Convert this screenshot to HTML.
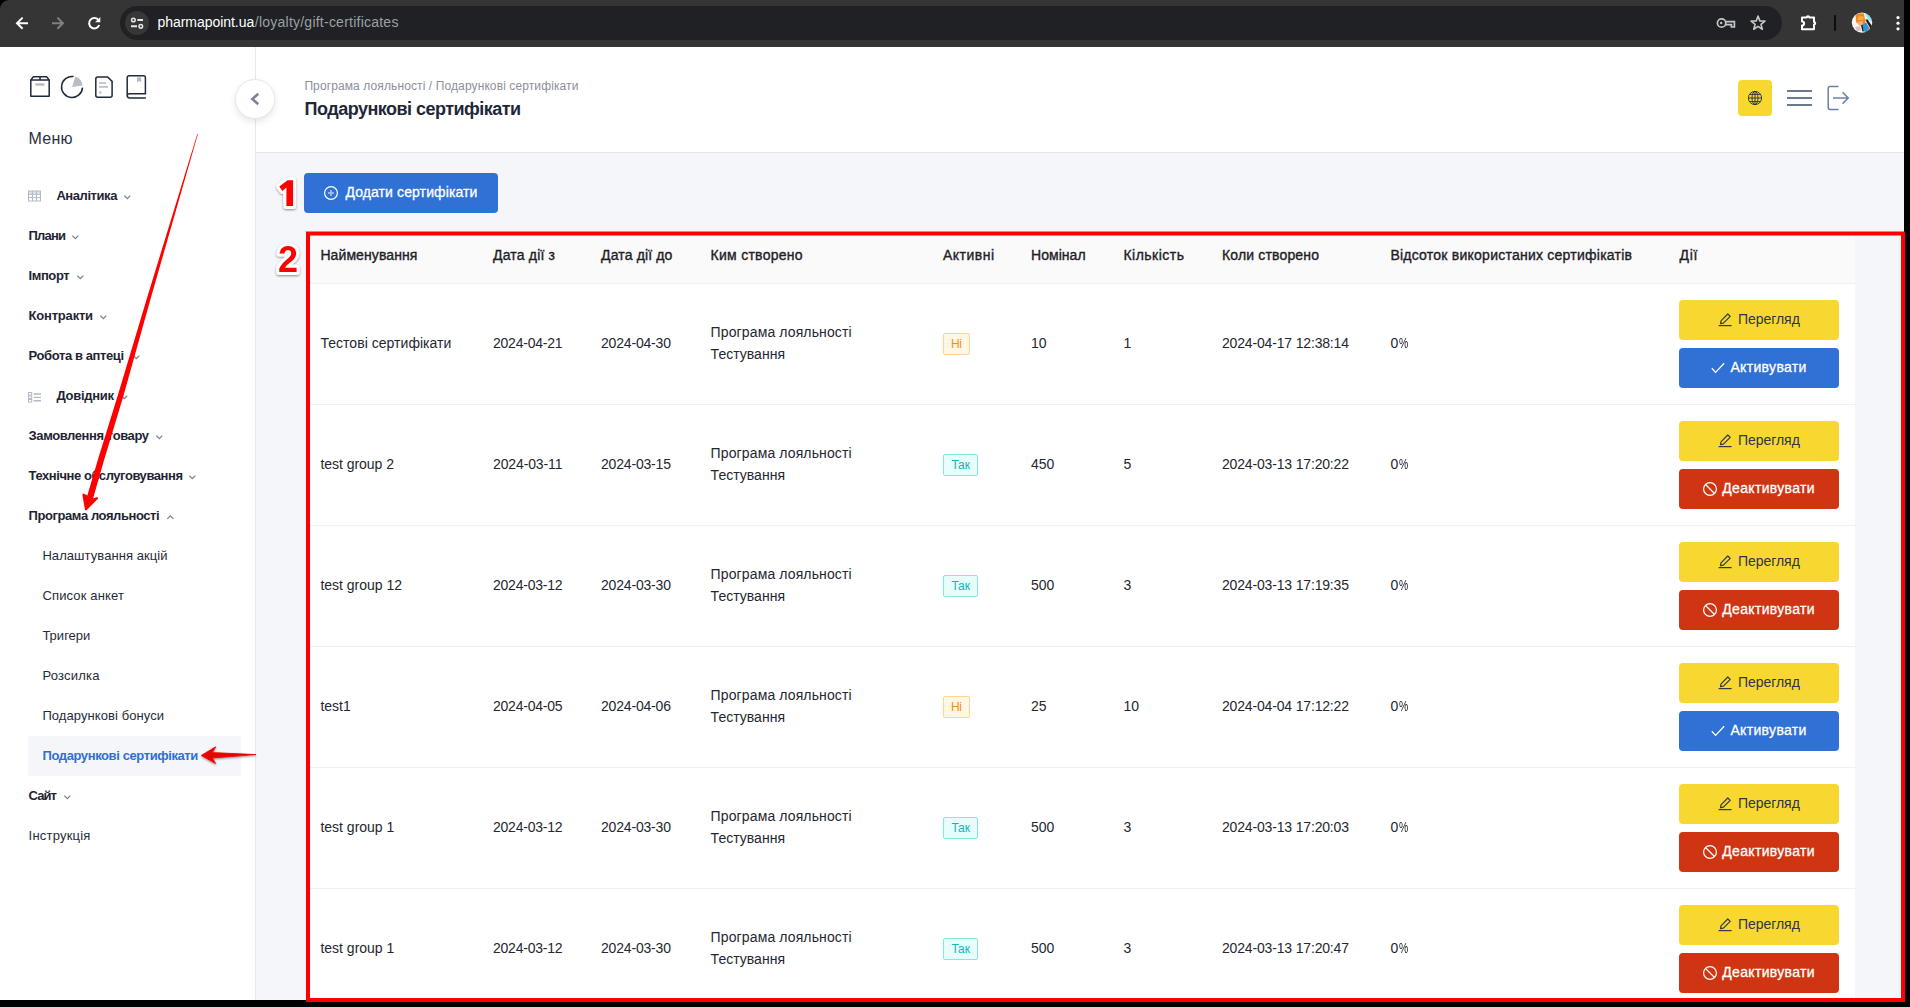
<!DOCTYPE html>
<html lang="uk"><head><meta charset="utf-8"><title>Подарункові сертифікати</title>
<style>
html,body{margin:0;padding:0}
body{width:1910px;height:1007px;overflow:hidden;background:#000;position:relative;font-family:'Liberation Sans',sans-serif;}
.t{position:absolute;white-space:nowrap;line-height:1;}
.ic{position:absolute;overflow:visible}
#chrome{position:absolute;left:0;top:0;width:1904px;height:47px;background:#353535;border-top-left-radius:9px;overflow:hidden}
#omni{position:absolute;left:120px;top:6px;width:1662px;height:34px;border-radius:17px;background:#202124;}
#pc{position:absolute;left:0;top:0;width:1904px;height:1000px;overflow:hidden}
#bg{position:absolute;left:0;top:47px;width:1904px;height:953px;background:#f5f6fa}
#side{position:absolute;left:0;top:47px;width:255px;height:953px;background:#fff;border-right:1px solid #e4e8ef}
#act{position:absolute;left:28px;top:736px;width:213px;height:40px;background:#f5f6fa}
#head{position:absolute;left:256px;top:47px;width:1648px;height:105px;background:#fff;border-bottom:1px solid #e2e6ef}
#tbl{position:absolute;left:306px;top:236px;width:1549px;height:780px;background:#fff}
#thead{position:absolute;left:306px;top:236px;width:1549px;height:47px;background:#fafafa;border-bottom:1px solid #f0f0f0}
.rl{position:absolute;left:306px;width:1549px;height:1px;background:#f0f0f0}
.btn{position:absolute;width:160px;height:40px;border-radius:4px}
.by{background:#f8d830} .bb{background:#2f71d4} .br{background:#cf3513}
.tag{position:absolute;height:20px;border:1px solid;border-radius:2px}
.tag-o{background:#fff7e6;border-color:#ffd591;width:25px}
.tag-c{background:#e6fffb;border-color:#87e8de;width:33px}
#addbtn{position:absolute;left:304px;top:173px;width:194px;height:40px;border-radius:4px;background:#2f71d4}
#colbtn{position:absolute;left:235px;top:79px;width:38px;height:38px;border-radius:50%;background:#fff;border:1px solid #e4e8f0;box-shadow:0 3px 6px rgba(60,70,100,.13)}
#lang{position:absolute;left:1738px;top:80px;width:34px;height:36px;border-radius:4px;background:#f8d830}
#annot{position:absolute;left:0;top:0}
</style></head><body>
<div id="chrome"><div id="omni"></div>
<svg class="ic" style="left:0;top:0" width="1904" height="47" viewBox="0 0 1904 47">
 <!-- back -->
 <g fill="none" stroke="#fff" stroke-width="2" stroke-linecap="butt" stroke-linejoin="miter">
  <path d="M28 23.2 H17.5 M22.6 17.6 L17 23.2 L22.6 28.8"/>
 </g>
 <!-- forward (disabled) -->
 <g fill="none" stroke="#808080" stroke-width="2">
  <path d="M52 23.2 H62.5 M57.4 17.6 L63 23.2 L57.4 28.8"/>
 </g>
 <!-- reload -->
 <g fill="none" stroke="#fff" stroke-width="2">
  <path d="M98.6 20.2 A5.2 5.2 0 1 0 99.2 25"/>
 </g>
 <path d="M100.3 17 V22.2 H95.1 Z" fill="#fff"/>
 <!-- site info -->
 <circle cx="137" cy="23" r="12" fill="#373737"/>
 <g fill="none" stroke="#e8e8e8">
  <circle cx="133.4" cy="20" r="1.8" stroke-width="1.5"/><path d="M137.4 20 H143" stroke-width="2"/>
  <circle cx="140.8" cy="26.2" r="1.8" stroke-width="1.5"/><path d="M131 26.2 H137" stroke-width="2"/>
 </g>
 <!-- key -->
 <g fill="none" stroke="#c4c7c5" stroke-width="1.7">
  <circle cx="1721.6" cy="23" r="4.2"/>
  <path d="M1725.8 21.6 H1734.4 V27 H1731.4 V24.6 H1725.6"/>
 </g>
 <circle cx="1721.2" cy="23" r="1.2" fill="#c4c7c5"/>
 <!-- star -->
 <path d="M1758.05 16.05 L1759.85 20.87 L1764.99 21.09 L1760.97 24.30 L1762.34 29.26 L1758.05 26.42 L1753.76 29.26 L1755.13 24.30 L1751.11 21.09 L1756.25 20.87 Z" fill="none" stroke="#c4c7c5" stroke-width="1.6" stroke-linejoin="round"/>
 <!-- extensions puzzle -->
 <path d="M1802 17.4 H1806.8 A1.2 1.2 0 0 1 1809.2 17.4 H1814 V22 A1.2 1.2 0 0 1 1814 24.4 V29.2 H1802 V25.6 A1.7 1.7 0 0 0 1802 21.4 Z" fill="none" stroke="#fff" stroke-width="2" stroke-linejoin="round"/>
 <!-- separator -->
 <rect x="1834" y="15.2" width="2" height="15.6" fill="#0d0d0d"/>
 <!-- avatar -->
 <defs><clipPath id="av"><circle cx="1862" cy="22.6" r="10.2"/></clipPath><filter id="avb" x="-20%" y="-20%" width="140%" height="140%"><feGaussianBlur stdDeviation="0.55"/></filter></defs>
 <g clip-path="url(#av)"><g filter="url(#avb)">
  <rect x="1850" y="10" width="24" height="24" fill="#f7f5f5"/>
  <path d="M1864.5 12 H1873 V22 L1868 20 Z" fill="#8fe6f2"/>
  <path d="M1855.6 15.2 Q1858 12.6 1864 13.6 L1865.4 22.6 L1863 27 L1858.6 24.6 L1856 22 Z" fill="#ee8620"/>
  <path d="M1858 17 Q1861 15 1864 17 L1863 20 L1858 20 Z" fill="#f9a83a"/>
  <path d="M1857.4 21.8 L1862.6 21 L1863 25 L1859 25.4 Z" fill="#f3b071"/>
  <path d="M1865.2 19.6 L1867.6 19.4 L1872 26 L1870.6 29 Z" fill="#3a1708"/>
  <path d="M1863 24 L1866.2 22.6 L1870 29.6 L1866.4 32.4 L1862.2 30.6 Z" fill="#2e93d6"/>
  <path d="M1867.4 29.4 L1869.6 28.6 L1869.4 31 L1867.6 31.6 Z" fill="#e59a4c"/>
  <path d="M1855 27 L1860 26 L1861 30.6 L1857 31.4 Z" fill="#d9c3c3"/>
  <path d="M1861 25.4 L1862.4 31.4 L1863.6 31.6 L1862.6 24.6 Z" fill="#2a2020"/>
 </g></g>
 <!-- dots -->
 <circle cx="1898" cy="17.6" r="1.6" fill="#fff"/><circle cx="1898" cy="23.2" r="1.6" fill="#fff"/><circle cx="1898" cy="28.8" r="1.6" fill="#fff"/>
</svg>

</div>
<div id="pc">
<div id="bg"></div>
<div id="side"></div><div id="act"></div>
<div id="head"></div>
<div id="colbtn"></div>
<div id="lang"></div>
<div id="addbtn"></div>
<div id="tbl"></div><div id="thead"></div>
<div class="rl" style="top:404px"></div><div class="rl" style="top:525px"></div><div class="rl" style="top:646px"></div><div class="rl" style="top:767px"></div><div class="rl" style="top:888px"></div>
<svg class="ic" style="left:0;top:47px" width="256" height="953" viewBox="0 47 256 953">
 <!-- box -->
 <g fill="none" stroke="#222b39" stroke-width="1.5" stroke-linejoin="round">
  <path d="M30.8 96.2 V80 L33.4 76.8 H46.6 L49.2 80 V96.2 Z"/>
  <path d="M30.8 80 H49.2 M40 77 V80"/>
 </g>
 <rect x="35.2" y="83.2" width="9.4" height="2.6" rx="1.2" fill="#b7bcc5"/>
 <!-- pie -->
 <path d="M72 86.9 L75.4 76.6 A10.9 10.9 0 0 1 82.7 85.6 Z" fill="#b9bdc5"/>
 <path d="M82.5 87.6 A10.5 10.5 0 1 1 73.6 76.6" fill="none" stroke="#222b39" stroke-width="1.5"/>
 <!-- doc -->
 <path d="M97.8 76.9 H107.6 L112.1 81.4 V95.2 A2 2 0 0 1 110.1 97.2 H97.8 A2 2 0 0 1 95.8 95.2 V78.9 A2 2 0 0 1 97.8 76.9 Z" fill="none" stroke="#222b39" stroke-width="1.5"/>
 <rect x="99" y="82.2" width="7" height="1.6" fill="#b7bcc5"/><rect x="99" y="86.1" width="9" height="1.6" fill="#b7bcc5"/><circle cx="100.4" cy="92.5" r="1.2" fill="#b7bcc5"/>
 <!-- book -->
 <path d="M145.9 97.9 H129.6 A2.4 2.4 0 0 1 127.2 95.5 V77.8 A2 2 0 0 1 129.2 75.8 H143.4 A2 2 0 0 1 145.4 77.8 V93.7 H129.4 A2 2 0 0 0 127.3 95.6" fill="none" stroke="#222b39" stroke-width="1.5"/>
 <path d="M137 77.2 H141.2 V82.4 L139.1 81 L137 82.4 Z" fill="#b7bcc5"/>
 <!-- menu icon: table -->
 <g fill="none" stroke="#b3bac8" stroke-width="1">
  <rect x="28.5" y="191" width="12" height="3.3" fill="#dfe3ea" stroke="none"/><rect x="28.5" y="191" width="12" height="10"/>
  <path d="M28.5 194.3 H40.5 M28.5 197.6 H40.5 M32.5 191 V201 M36.5 191 V201"/>
 </g>
 <!-- menu icon: list -->
 <g fill="none" stroke="#b3bac8" stroke-width="1">
  <rect x="28.5" y="392.5" width="3.2" height="2.6"/><rect x="28.5" y="396" width="3.2" height="2.6"/><rect x="28.5" y="399.5" width="3.2" height="2.6"/>
 </g>
 <g stroke="#b3bac8" stroke-width="1.4"><path d="M33.6 394 H41 M33.6 397.4 H41 M33.6 400.8 H41"/></g>
 <!-- collapse chevron -->
 <path d="M258.3 93.8 L252.4 99 L258.3 104.2" fill="none" stroke="#7a8593" stroke-width="2.6"/>
</svg>

<svg class="ic" style="left:1700px;top:60px" width="200" height="100" viewBox="1700 60 200 100">
 <!-- globe -->
 <g fill="none" stroke="#1f2b4d" stroke-width="0.9">
  <circle cx="1755" cy="98" r="6.6"/>
  <ellipse cx="1755" cy="98" rx="3" ry="6.6"/>
  <path d="M1748.4 98 H1761.6 M1755 91.4 V104.6 M1749.6 94.4 H1760.4 M1749.6 101.6 H1760.4"/>
 </g>
 <!-- hamburger -->
 <g stroke="#6b7a8d" stroke-width="2"><path d="M1787 91 H1812 M1787 98 H1812 M1787 105 H1812"/></g>
 <!-- logout -->
 <g fill="none" stroke="#6b82a8" stroke-width="1.5">
  <path d="M1838.5 86.6 H1830 A1.8 1.8 0 0 0 1828.2 88.4 V107.6 A1.8 1.8 0 0 0 1830 109.4 H1838.5"/>
  <path d="M1833 98 H1848 M1842.6 92.4 L1848.2 98 L1842.6 103.6"/>
 </g>
</svg>
<svg class="ic" style="left:323px;top:185px" width="16" height="16" viewBox="0 0 16 16"><circle cx="8" cy="8" r="6.4" fill="none" stroke="#fff" stroke-width="1.2"/><path d="M8 5 V11 M5 8 H11" stroke="#fff" stroke-opacity="0.62" stroke-width="1.5"/></svg>

<svg class="ic" style="left:124.4px;top:195.4px" width="6.6" height="4.5" viewBox="0 0 6.6 4.5"><path d="M0.3 0.6 L3.3 3.7 L6.3 0.6" fill="none" stroke="#76818f" stroke-width="1.25"/></svg><svg class="ic" style="left:72.4px;top:235.4px" width="6.6" height="4.5" viewBox="0 0 6.6 4.5"><path d="M0.3 0.6 L3.3 3.7 L6.3 0.6" fill="none" stroke="#76818f" stroke-width="1.25"/></svg><svg class="ic" style="left:76.6px;top:275.4px" width="6.6" height="4.5" viewBox="0 0 6.6 4.5"><path d="M0.3 0.6 L3.3 3.7 L6.3 0.6" fill="none" stroke="#76818f" stroke-width="1.25"/></svg><svg class="ic" style="left:99.5px;top:315.4px" width="6.6" height="4.5" viewBox="0 0 6.6 4.5"><path d="M0.3 0.6 L3.3 3.7 L6.3 0.6" fill="none" stroke="#76818f" stroke-width="1.25"/></svg><svg class="ic" style="left:132.6px;top:355.4px" width="6.6" height="4.5" viewBox="0 0 6.6 4.5"><path d="M0.3 0.6 L3.3 3.7 L6.3 0.6" fill="none" stroke="#76818f" stroke-width="1.25"/></svg><svg class="ic" style="left:120.6px;top:395.4px" width="6.6" height="4.5" viewBox="0 0 6.6 4.5"><path d="M0.3 0.6 L3.3 3.7 L6.3 0.6" fill="none" stroke="#76818f" stroke-width="1.25"/></svg><svg class="ic" style="left:155.6px;top:435.4px" width="6.6" height="4.5" viewBox="0 0 6.6 4.5"><path d="M0.3 0.6 L3.3 3.7 L6.3 0.6" fill="none" stroke="#76818f" stroke-width="1.25"/></svg><svg class="ic" style="left:189.4px;top:475.4px" width="6.6" height="4.5" viewBox="0 0 6.6 4.5"><path d="M0.3 0.6 L3.3 3.7 L6.3 0.6" fill="none" stroke="#76818f" stroke-width="1.25"/></svg><svg class="ic" style="left:166.6px;top:515.2px" width="6.6" height="4.5" viewBox="0 0 6.6 4.5"><path d="M0.3 3.9 L3.3 0.9 L6.3 3.9" fill="none" stroke="#76818f" stroke-width="1.25"/></svg><svg class="ic" style="left:63.6px;top:795.4px" width="6.6" height="4.5" viewBox="0 0 6.6 4.5"><path d="M0.3 0.6 L3.3 3.7 L6.3 0.6" fill="none" stroke="#76818f" stroke-width="1.25"/></svg>
<div class="tag tag-o" style="left:943px;top:333px"></div><div class="btn by" style="left:1679px;top:300px"></div><svg class="ic" style="left:1717px;top:311.2px" width="16" height="16" viewBox="0 0 16 16"><path d="M4 9.8 L10.8 3 L13.2 5.4 L6.4 12.2 L3.5 12.7 Z" fill="none" stroke="#2f3a4a" stroke-width="1.2" stroke-linejoin="round"/><path d="M1.6 14.6 H14.6" stroke="#2f3a4a" stroke-width="1.2"/></svg><div class="btn bb" style="left:1679px;top:348px"></div><svg class="ic" style="left:1710px;top:360px" width="16" height="16" viewBox="0 0 16 16"><path d="M1.8 8.2 L5.6 12.4 L14.2 3.2" fill="none" stroke="#fff" stroke-width="1.3"/></svg><div class="tag tag-c" style="left:943px;top:454px"></div><div class="btn by" style="left:1679px;top:421px"></div><svg class="ic" style="left:1717px;top:432.2px" width="16" height="16" viewBox="0 0 16 16"><path d="M4 9.8 L10.8 3 L13.2 5.4 L6.4 12.2 L3.5 12.7 Z" fill="none" stroke="#2f3a4a" stroke-width="1.2" stroke-linejoin="round"/><path d="M1.6 14.6 H14.6" stroke="#2f3a4a" stroke-width="1.2"/></svg><div class="btn br" style="left:1679px;top:469px"></div><svg class="ic" style="left:1702px;top:480.8px" width="16" height="16" viewBox="0 0 16 16"><circle cx="8" cy="8" r="6.4" fill="none" stroke="#fff" stroke-width="1.2"/><path d="M3.5 3.5 L12.5 12.5" stroke="#fff" stroke-width="1.2"/></svg><div class="tag tag-c" style="left:943px;top:575px"></div><div class="btn by" style="left:1679px;top:542px"></div><svg class="ic" style="left:1717px;top:553.2px" width="16" height="16" viewBox="0 0 16 16"><path d="M4 9.8 L10.8 3 L13.2 5.4 L6.4 12.2 L3.5 12.7 Z" fill="none" stroke="#2f3a4a" stroke-width="1.2" stroke-linejoin="round"/><path d="M1.6 14.6 H14.6" stroke="#2f3a4a" stroke-width="1.2"/></svg><div class="btn br" style="left:1679px;top:590px"></div><svg class="ic" style="left:1702px;top:601.8px" width="16" height="16" viewBox="0 0 16 16"><circle cx="8" cy="8" r="6.4" fill="none" stroke="#fff" stroke-width="1.2"/><path d="M3.5 3.5 L12.5 12.5" stroke="#fff" stroke-width="1.2"/></svg><div class="tag tag-o" style="left:943px;top:696px"></div><div class="btn by" style="left:1679px;top:663px"></div><svg class="ic" style="left:1717px;top:674.2px" width="16" height="16" viewBox="0 0 16 16"><path d="M4 9.8 L10.8 3 L13.2 5.4 L6.4 12.2 L3.5 12.7 Z" fill="none" stroke="#2f3a4a" stroke-width="1.2" stroke-linejoin="round"/><path d="M1.6 14.6 H14.6" stroke="#2f3a4a" stroke-width="1.2"/></svg><div class="btn bb" style="left:1679px;top:711px"></div><svg class="ic" style="left:1710px;top:723px" width="16" height="16" viewBox="0 0 16 16"><path d="M1.8 8.2 L5.6 12.4 L14.2 3.2" fill="none" stroke="#fff" stroke-width="1.3"/></svg><div class="tag tag-c" style="left:943px;top:817px"></div><div class="btn by" style="left:1679px;top:784px"></div><svg class="ic" style="left:1717px;top:795.2px" width="16" height="16" viewBox="0 0 16 16"><path d="M4 9.8 L10.8 3 L13.2 5.4 L6.4 12.2 L3.5 12.7 Z" fill="none" stroke="#2f3a4a" stroke-width="1.2" stroke-linejoin="round"/><path d="M1.6 14.6 H14.6" stroke="#2f3a4a" stroke-width="1.2"/></svg><div class="btn br" style="left:1679px;top:832px"></div><svg class="ic" style="left:1702px;top:843.8px" width="16" height="16" viewBox="0 0 16 16"><circle cx="8" cy="8" r="6.4" fill="none" stroke="#fff" stroke-width="1.2"/><path d="M3.5 3.5 L12.5 12.5" stroke="#fff" stroke-width="1.2"/></svg><div class="tag tag-c" style="left:943px;top:938px"></div><div class="btn by" style="left:1679px;top:905px"></div><svg class="ic" style="left:1717px;top:916.2px" width="16" height="16" viewBox="0 0 16 16"><path d="M4 9.8 L10.8 3 L13.2 5.4 L6.4 12.2 L3.5 12.7 Z" fill="none" stroke="#2f3a4a" stroke-width="1.2" stroke-linejoin="round"/><path d="M1.6 14.6 H14.6" stroke="#2f3a4a" stroke-width="1.2"/></svg><div class="btn br" style="left:1679px;top:953px"></div><svg class="ic" style="left:1702px;top:964.8px" width="16" height="16" viewBox="0 0 16 16"><circle cx="8" cy="8" r="6.4" fill="none" stroke="#fff" stroke-width="1.2"/><path d="M3.5 3.5 L12.5 12.5" stroke="#fff" stroke-width="1.2"/></svg>
<span class="t" style="left:157.5px;top:15.00px;font-size:14px;color:#ffffff;letter-spacing:-0.046px;">pharmapoint.ua</span><span class="t" style="left:254.8px;top:15.00px;font-size:14px;color:#9aa0a6;letter-spacing:0.235px;">/loyalty/gift-certificates</span><span class="t" style="left:28.6px;top:131.00px;font-size:16px;color:#2a3140;letter-spacing:0.250px;">Меню</span><span class="t" style="left:56.4px;top:189.00px;font-size:13px;font-weight:700;color:#1f2434;letter-spacing:-0.430px;">Аналітика</span><span class="t" style="left:28.6px;top:229.00px;font-size:13px;font-weight:700;color:#1f2434;letter-spacing:-0.822px;">Плани</span><span class="t" style="left:28.6px;top:269.00px;font-size:13px;font-weight:700;color:#1f2434;letter-spacing:-0.434px;">Імпорт</span><span class="t" style="left:28.6px;top:309.00px;font-size:13px;font-weight:700;color:#1f2434;letter-spacing:-0.205px;">Контракти</span><span class="t" style="left:28.6px;top:349.00px;font-size:13px;font-weight:700;color:#1f2434;letter-spacing:-0.402px;">Робота в аптеці</span><span class="t" style="left:56.4px;top:389.00px;font-size:13px;font-weight:700;color:#1f2434;letter-spacing:-0.283px;">Довідник</span><span class="t" style="left:28.6px;top:429.00px;font-size:13px;font-weight:700;color:#1f2434;letter-spacing:-0.412px;">Замовлення товару</span><span class="t" style="left:28.6px;top:469.00px;font-size:13px;font-weight:700;color:#1f2434;letter-spacing:-0.439px;">Технічне обслуговування</span><span class="t" style="left:28.6px;top:509.00px;font-size:13px;font-weight:700;color:#1f2434;letter-spacing:-0.424px;">Програма лояльності</span><span class="t" style="left:42.4px;top:549.00px;font-size:13px;color:#272b38;letter-spacing:0.072px;">Налаштування акцій</span><span class="t" style="left:42.4px;top:589.00px;font-size:13px;color:#272b38;letter-spacing:0.157px;">Список анкет</span><span class="t" style="left:42.4px;top:629.00px;font-size:13px;color:#272b38;letter-spacing:0.018px;">Тригери</span><span class="t" style="left:42.4px;top:669.00px;font-size:13px;color:#272b38;letter-spacing:0.205px;">Розсилка</span><span class="t" style="left:42.4px;top:709.00px;font-size:13px;color:#272b38;letter-spacing:0.076px;">Подарункові бонуси</span><span class="t" style="left:42.5px;top:749.00px;font-size:13px;font-weight:700;color:#2f6fd3;letter-spacing:-0.400px;">Подарункові сертифікати</span><span class="t" style="left:28.6px;top:789.00px;font-size:13px;font-weight:700;color:#1f2434;letter-spacing:-0.914px;">Сайт</span><span class="t" style="left:28.6px;top:829.00px;font-size:13px;color:#272b38;letter-spacing:0.212px;">Інструкція</span><span class="t" style="left:304.4px;top:80.00px;font-size:12px;color:#8b909c;letter-spacing:0.108px;">Програма лояльності / Подарункові сертифікати</span><span class="t" style="left:304.6px;top:100.00px;font-size:18px;font-weight:700;color:#1e2738;letter-spacing:-0.515px;">Подарункові сертифікати</span><span class="t" style="left:345.4px;top:185.00px;font-size:14px;color:#ffffff;letter-spacing:0.108px;-webkit-text-stroke:0.3px currentColor;">Додати сертифікати</span><span class="t" style="left:320.4px;top:248.00px;font-size:14px;color:#1e2026;letter-spacing:0.092px;-webkit-text-stroke:0.35px currentColor;">Найменування</span><span class="t" style="left:493px;top:248.00px;font-size:14px;color:#1e2026;letter-spacing:0.181px;-webkit-text-stroke:0.35px currentColor;">Дата дії з</span><span class="t" style="left:601px;top:248.00px;font-size:14px;color:#1e2026;letter-spacing:0.149px;-webkit-text-stroke:0.35px currentColor;">Дата дії до</span><span class="t" style="left:710.6px;top:248.00px;font-size:14px;color:#1e2026;letter-spacing:0.267px;-webkit-text-stroke:0.35px currentColor;">Ким створено</span><span class="t" style="left:943px;top:248.00px;font-size:14px;color:#1e2026;letter-spacing:0.477px;-webkit-text-stroke:0.35px currentColor;">Активні</span><span class="t" style="left:1031px;top:248.00px;font-size:14px;color:#1e2026;letter-spacing:0.045px;-webkit-text-stroke:0.35px currentColor;">Номінал</span><span class="t" style="left:1123.4px;top:248.00px;font-size:14px;color:#1e2026;letter-spacing:0.491px;-webkit-text-stroke:0.35px currentColor;">Кількість</span><span class="t" style="left:1222px;top:248.00px;font-size:14px;color:#1e2026;letter-spacing:0.159px;-webkit-text-stroke:0.35px currentColor;">Коли створено</span><span class="t" style="left:1390.4px;top:248.00px;font-size:14px;color:#1e2026;letter-spacing:0.238px;-webkit-text-stroke:0.35px currentColor;">Відсоток використаних сертифікатів</span><span class="t" style="left:1679.4px;top:248.00px;font-size:14px;color:#1e2026;letter-spacing:0.758px;-webkit-text-stroke:0.35px currentColor;">Дії</span><span class="t" style="left:320.4px;top:336.00px;font-size:14px;color:#24272f;letter-spacing:0.038px;">Тестові сертифікати</span><span class="t" style="left:493px;top:336.00px;font-size:14px;color:#24272f;letter-spacing:-0.236px;">2024-04-21</span><span class="t" style="left:601px;top:336.00px;font-size:14px;color:#24272f;letter-spacing:-0.181px;">2024-04-30</span><span class="t" style="left:710.6px;top:325.00px;font-size:14px;color:#24272f;letter-spacing:0.122px;">Програма лояльності</span><span class="t" style="left:710.6px;top:347.00px;font-size:14px;color:#24272f;letter-spacing:0.018px;">Тестування</span><span class="t" style="left:1031px;top:336.00px;font-size:14px;color:#24272f;">10</span><span class="t" style="left:1123.5px;top:336.00px;font-size:14px;color:#24272f;">1</span><span class="t" style="left:1222px;top:336.00px;font-size:14px;color:#24272f;letter-spacing:-0.167px;">2024-04-17 12:38:14</span><span class="t" style="left:1390.4px;top:336.00px;font-size:14px;color:#24272f;">0</span><span class="t" style="left:1398.8px;top:336.00px;font-size:14px;color:#24272f;transform:scaleX(.74);transform-origin:0 0;">%</span><span class="t" style="left:951px;top:338.00px;font-size:12px;color:#fa8c16;letter-spacing:-0.344px;">Ні</span><span class="t" style="left:1738px;top:312.00px;font-size:14px;color:#2c3646;letter-spacing:-0.049px;">Перегляд</span><span class="t" style="left:1730.4px;top:360.00px;font-size:14px;color:#fff;letter-spacing:0.335px;-webkit-text-stroke:0.3px currentColor;">Активувати</span><span class="t" style="left:320.4px;top:457.00px;font-size:14px;color:#24272f;letter-spacing:-0.031px;">test group 2</span><span class="t" style="left:493px;top:457.00px;font-size:14px;color:#24272f;letter-spacing:-0.120px;">2024-03-11</span><span class="t" style="left:601px;top:457.00px;font-size:14px;color:#24272f;letter-spacing:-0.181px;">2024-03-15</span><span class="t" style="left:710.6px;top:446.00px;font-size:14px;color:#24272f;letter-spacing:0.122px;">Програма лояльності</span><span class="t" style="left:710.6px;top:468.00px;font-size:14px;color:#24272f;letter-spacing:0.018px;">Тестування</span><span class="t" style="left:1031px;top:457.00px;font-size:14px;color:#24272f;">450</span><span class="t" style="left:1123.5px;top:457.00px;font-size:14px;color:#24272f;">5</span><span class="t" style="left:1222px;top:457.00px;font-size:14px;color:#24272f;letter-spacing:-0.167px;">2024-03-13 17:20:22</span><span class="t" style="left:1390.4px;top:457.00px;font-size:14px;color:#24272f;">0</span><span class="t" style="left:1398.8px;top:457.00px;font-size:14px;color:#24272f;transform:scaleX(.74);transform-origin:0 0;">%</span><span class="t" style="left:951.4px;top:459.00px;font-size:12px;color:#13b5b5;letter-spacing:-0.059px;">Так</span><span class="t" style="left:1738px;top:433.00px;font-size:14px;color:#2c3646;letter-spacing:-0.049px;">Перегляд</span><span class="t" style="left:1722.3px;top:481.00px;font-size:14px;color:#fff;letter-spacing:0.318px;-webkit-text-stroke:0.3px currentColor;">Деактивувати</span><span class="t" style="left:320.4px;top:578.00px;font-size:14px;color:#24272f;letter-spacing:-0.011px;">test group 12</span><span class="t" style="left:493px;top:578.00px;font-size:14px;color:#24272f;letter-spacing:-0.236px;">2024-03-12</span><span class="t" style="left:601px;top:578.00px;font-size:14px;color:#24272f;letter-spacing:-0.181px;">2024-03-30</span><span class="t" style="left:710.6px;top:567.00px;font-size:14px;color:#24272f;letter-spacing:0.122px;">Програма лояльності</span><span class="t" style="left:710.6px;top:589.00px;font-size:14px;color:#24272f;letter-spacing:0.018px;">Тестування</span><span class="t" style="left:1031px;top:578.00px;font-size:14px;color:#24272f;">500</span><span class="t" style="left:1123.5px;top:578.00px;font-size:14px;color:#24272f;">3</span><span class="t" style="left:1222px;top:578.00px;font-size:14px;color:#24272f;letter-spacing:-0.167px;">2024-03-13 17:19:35</span><span class="t" style="left:1390.4px;top:578.00px;font-size:14px;color:#24272f;">0</span><span class="t" style="left:1398.8px;top:578.00px;font-size:14px;color:#24272f;transform:scaleX(.74);transform-origin:0 0;">%</span><span class="t" style="left:951.4px;top:580.00px;font-size:12px;color:#13b5b5;letter-spacing:-0.059px;">Так</span><span class="t" style="left:1738px;top:554.00px;font-size:14px;color:#2c3646;letter-spacing:-0.049px;">Перегляд</span><span class="t" style="left:1722.3px;top:602.00px;font-size:14px;color:#fff;letter-spacing:0.318px;-webkit-text-stroke:0.3px currentColor;">Деактивувати</span><span class="t" style="left:320.4px;top:699.00px;font-size:14px;color:#24272f;">test1</span><span class="t" style="left:493px;top:699.00px;font-size:14px;color:#24272f;letter-spacing:-0.236px;">2024-04-05</span><span class="t" style="left:601px;top:699.00px;font-size:14px;color:#24272f;letter-spacing:-0.181px;">2024-04-06</span><span class="t" style="left:710.6px;top:688.00px;font-size:14px;color:#24272f;letter-spacing:0.122px;">Програма лояльності</span><span class="t" style="left:710.6px;top:710.00px;font-size:14px;color:#24272f;letter-spacing:0.018px;">Тестування</span><span class="t" style="left:1031px;top:699.00px;font-size:14px;color:#24272f;">25</span><span class="t" style="left:1123.5px;top:699.00px;font-size:14px;color:#24272f;">10</span><span class="t" style="left:1222px;top:699.00px;font-size:14px;color:#24272f;letter-spacing:-0.167px;">2024-04-04 17:12:22</span><span class="t" style="left:1390.4px;top:699.00px;font-size:14px;color:#24272f;">0</span><span class="t" style="left:1398.8px;top:699.00px;font-size:14px;color:#24272f;transform:scaleX(.74);transform-origin:0 0;">%</span><span class="t" style="left:951px;top:701.00px;font-size:12px;color:#fa8c16;letter-spacing:-0.344px;">Ні</span><span class="t" style="left:1738px;top:675.00px;font-size:14px;color:#2c3646;letter-spacing:-0.049px;">Перегляд</span><span class="t" style="left:1730.4px;top:723.00px;font-size:14px;color:#fff;letter-spacing:0.335px;-webkit-text-stroke:0.3px currentColor;">Активувати</span><span class="t" style="left:320.4px;top:820.00px;font-size:14px;color:#24272f;">test group 1</span><span class="t" style="left:493px;top:820.00px;font-size:14px;color:#24272f;letter-spacing:-0.236px;">2024-03-12</span><span class="t" style="left:601px;top:820.00px;font-size:14px;color:#24272f;letter-spacing:-0.181px;">2024-03-30</span><span class="t" style="left:710.6px;top:809.00px;font-size:14px;color:#24272f;letter-spacing:0.122px;">Програма лояльності</span><span class="t" style="left:710.6px;top:831.00px;font-size:14px;color:#24272f;letter-spacing:0.018px;">Тестування</span><span class="t" style="left:1031px;top:820.00px;font-size:14px;color:#24272f;">500</span><span class="t" style="left:1123.5px;top:820.00px;font-size:14px;color:#24272f;">3</span><span class="t" style="left:1222px;top:820.00px;font-size:14px;color:#24272f;letter-spacing:-0.167px;">2024-03-13 17:20:03</span><span class="t" style="left:1390.4px;top:820.00px;font-size:14px;color:#24272f;">0</span><span class="t" style="left:1398.8px;top:820.00px;font-size:14px;color:#24272f;transform:scaleX(.74);transform-origin:0 0;">%</span><span class="t" style="left:951.4px;top:822.00px;font-size:12px;color:#13b5b5;letter-spacing:-0.059px;">Так</span><span class="t" style="left:1738px;top:796.00px;font-size:14px;color:#2c3646;letter-spacing:-0.049px;">Перегляд</span><span class="t" style="left:1722.3px;top:844.00px;font-size:14px;color:#fff;letter-spacing:0.318px;-webkit-text-stroke:0.3px currentColor;">Деактивувати</span><span class="t" style="left:320.4px;top:941.00px;font-size:14px;color:#24272f;">test group 1</span><span class="t" style="left:493px;top:941.00px;font-size:14px;color:#24272f;letter-spacing:-0.236px;">2024-03-12</span><span class="t" style="left:601px;top:941.00px;font-size:14px;color:#24272f;letter-spacing:-0.181px;">2024-03-30</span><span class="t" style="left:710.6px;top:930.00px;font-size:14px;color:#24272f;letter-spacing:0.122px;">Програма лояльності</span><span class="t" style="left:710.6px;top:952.00px;font-size:14px;color:#24272f;letter-spacing:0.018px;">Тестування</span><span class="t" style="left:1031px;top:941.00px;font-size:14px;color:#24272f;">500</span><span class="t" style="left:1123.5px;top:941.00px;font-size:14px;color:#24272f;">3</span><span class="t" style="left:1222px;top:941.00px;font-size:14px;color:#24272f;letter-spacing:-0.167px;">2024-03-13 17:20:47</span><span class="t" style="left:1390.4px;top:941.00px;font-size:14px;color:#24272f;">0</span><span class="t" style="left:1398.8px;top:941.00px;font-size:14px;color:#24272f;transform:scaleX(.74);transform-origin:0 0;">%</span><span class="t" style="left:951.4px;top:943.00px;font-size:12px;color:#13b5b5;letter-spacing:-0.059px;">Так</span><span class="t" style="left:1738px;top:917.00px;font-size:14px;color:#2c3646;letter-spacing:-0.049px;">Перегляд</span><span class="t" style="left:1722.3px;top:965.00px;font-size:14px;color:#fff;letter-spacing:0.318px;-webkit-text-stroke:0.3px currentColor;">Деактивувати</span>
</div>
<svg id="annot" width="1910" height="1007" viewBox="0 0 1910 1007">
 <defs>
  <filter id="sh" x="-20%" y="-20%" width="140%" height="150%"><feDropShadow dx="0" dy="1" stdDeviation="0.8" flood-color="#000" flood-opacity="0.45"/></filter>
 </defs>
 <!-- red frame -->
 <rect x="308" y="233.5" width="1595" height="766.5" fill="none" stroke="#ff0000" stroke-width="4"/>
 <!-- long arrow -->
 <path d="M197.3 134 L147.6 296 L117.6 396 L97.8 460 L87 496.4 L92.8 499.4 L104.1 460 L123.4 396 L151.4 296 L197.9 134 Z" fill="#ff0000"/>
 <path d="M87.2 496.8 L83.5 494.7 L86 509.2 L96.9 498.2 L92.8 499.8 Z" fill="#ff0000" stroke="#ff0000" stroke-width="2.2" stroke-linejoin="round"/>
 <!-- short arrow -->
 <g filter="url(#sh)">
 <path d="M256 754.6 L212.4 752.6 L215.7 746.8 L201.3 755.4 L215.7 763.6 L212.4 758 Z" fill="#ee0000" stroke="#ee0000" stroke-width="0.8" stroke-linejoin="round"/>
 </g>
 <!-- numbers -->
 <g font-family="'Liberation Sans',sans-serif" font-weight="700" font-size="36" filter="url(#sh)">
  <path d="M293.1 180.2 V206 H286.4 V187.6 L282.4 190.9 L279.3 186.6 L287.6 180.2 Z" stroke="#fff" stroke-width="6" stroke-linejoin="round" fill="#fff"/>
  <path d="M293.1 180.2 V206 H286.4 V187.6 L282.4 190.9 L279.3 186.6 L287.6 180.2 Z" fill="#ff0000"/>
  <text x="278.1" y="271.6" stroke="#fff" stroke-width="6" stroke-linejoin="round" fill="#fff">2</text>
  <text x="278.1" y="271.6" fill="#ff0000">2</text>
 </g>
</svg>

</body></html>
